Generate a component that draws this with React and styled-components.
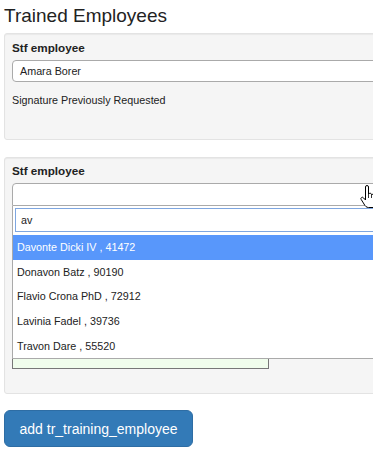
import React from "react";
import styled, { createGlobalStyle } from "styled-components";

const Global = createGlobalStyle`
  html, body { margin: 0; padding: 0; background: #fff; overflow: hidden; }
  body { font-family: "Liberation Sans", Arial, sans-serif; color: #333; }
  * { box-sizing: border-box; }
`;

const Page = styled.div`
  position: relative;
  width: 373px;
  height: 456px;
  overflow: hidden;
  padding-left: 4px;
`;

const Title = styled.h3`
  margin: 5px 0 6px;
  font-size: 19px;
  line-height: 22px;
  font-weight: normal;
  color: #222;
`;

const Well = styled.div`
  width: 420px;
  height: ${(p) => p.$h}px;
  margin-bottom: ${(p) => p.$mb}px;
  padding: ${(p) => p.$pt}px 8px 0 7px;
  background: #f5f5f5;
  border: 1px solid #e3e3e3;
  border-radius: 3px;
  box-shadow: inset 0 1px 1px rgba(0, 0, 0, 0.05);
  display: flex;
  flex-direction: column;
`;

const Label = styled.div`
  font-size: 11.7px;
  line-height: 14px;
  font-weight: bold;
  color: #222;
  margin-bottom: 5px;
`;

const TextBox = styled.div`
  height: 22px;
  border: 1px solid #aaa;
  border-radius: 4px;
  background: #fff;
  display: flex;
  align-items: center;
  padding-left: 7px;
  font-size: 10.75px;
  color: #222;
`;

const Note = styled.div`
  margin-top: 12px;
  font-size: 10.75px;
  line-height: 13px;
  color: #222;
`;

const SelectWrap = styled.div`
  position: relative;
`;

const SelectBox = styled.div`
  height: 23px;
  border: 1px solid #aaa;
  border-radius: 4px 4px 0 0;
  background: #fff;
`;

const Dropdown = styled.div`
  position: absolute;
  z-index: 2;
  left: 0;
  right: 0;
  top: 23px;
  background: #fff;
  border: 1px solid #aaa;
  border-top: none;
  padding: 2px 0 0 0;
`;

const SearchRow = styled.div`
  padding: 0 2px 3px 2px;
`;

const Search = styled.div`
  height: 24px;
  border: 1px solid #7ea6e0;
  background: #fff;
  display: flex;
  align-items: center;
  padding-left: 5px;
  font-size: 10.75px;
  color: #222;
`;

const Option = styled.div`
  height: 24.6px;
  display: flex;
  align-items: center;
  padding-left: 4px;
  font-size: 10.75px;
  color: ${(p) => (p.$active ? "#fff" : "#222")};
  background: ${(p) => (p.$active ? "#5897fb" : "#fff")};
`;

const SignaturePad = styled.div`
  margin-top: 13px;
  width: 257px;
  height: 150px;
  border: 1px solid #777;
  background: #f0fdec;
`;

const Button = styled.button`
  width: 189px;
  height: 37px;
  margin: 0;
  padding: 0;
  border: 1px solid #2e6da4;
  border-radius: 6px;
  background: #337ab7;
  color: #fff;
  font-family: "Liberation Sans", Arial, sans-serif;
  font-size: 14px;
  display: flex;
  align-items: center;
  justify-content: center;
`;

const Cursor = styled.svg`
  position: absolute;
  left: 359px;
  top: 185px;
  z-index: 5;
`;

const options = [
  "Davonte Dicki IV , 41472",
  "Donavon Batz , 90190",
  "Flavio Crona PhD , 72912",
  "Lavinia Fadel , 39736",
  "Travon Dare , 55520",
];

export default function App() {
  return (
    <>
      <Global />
      <Page>
        <Title>Trained Employees</Title>
        <Well $h={107} $mb={17} $pt={7}>
          <Label>Stf employee</Label>
          <TextBox>Amara Borer</TextBox>
          <Note>Signature Previously Requested</Note>
        </Well>
        <Well $h={237} $mb={16} $pt={6}>
          <Label>Stf employee</Label>
          <SelectWrap>
            <SelectBox />
            <Dropdown>
              <SearchRow>
                <Search>av</Search>
              </SearchRow>
              {options.map((o, i) => (
                <Option key={o} $active={i === 0}>
                  {o}
                </Option>
              ))}
            </Dropdown>
          </SelectWrap>
          <SignaturePad />
        </Well>
        <Button>add tr_training_employee</Button>
        <Cursor width="18" height="24" viewBox="0 0 18 24">
          <path
            d="M6.5 2a1.5 1.5 0 0 1 3 0v7h.2a1.5 1.5 0 0 1 2.8.5v.5a1.5 1.5 0 0 1 2.8.5v.5a1.4 1.4 0 0 1 2.7.5V16c0 3-1.5 5.5-4 6.5H9.5C7.5 22.5 6 21 5 19L2.2 14.5a1.4 1.4 0 0 1 2.3-1.6L6.5 15Z"
            fill="#fff"
            stroke="#000"
            strokeWidth="1"
            strokeLinejoin="round"
          />
          <path d="M9.5 9v4M12.5 10v3M15.3 11v2" stroke="#000" strokeWidth="0.8" />
        </Cursor>
      </Page>
    </>
  );
}
